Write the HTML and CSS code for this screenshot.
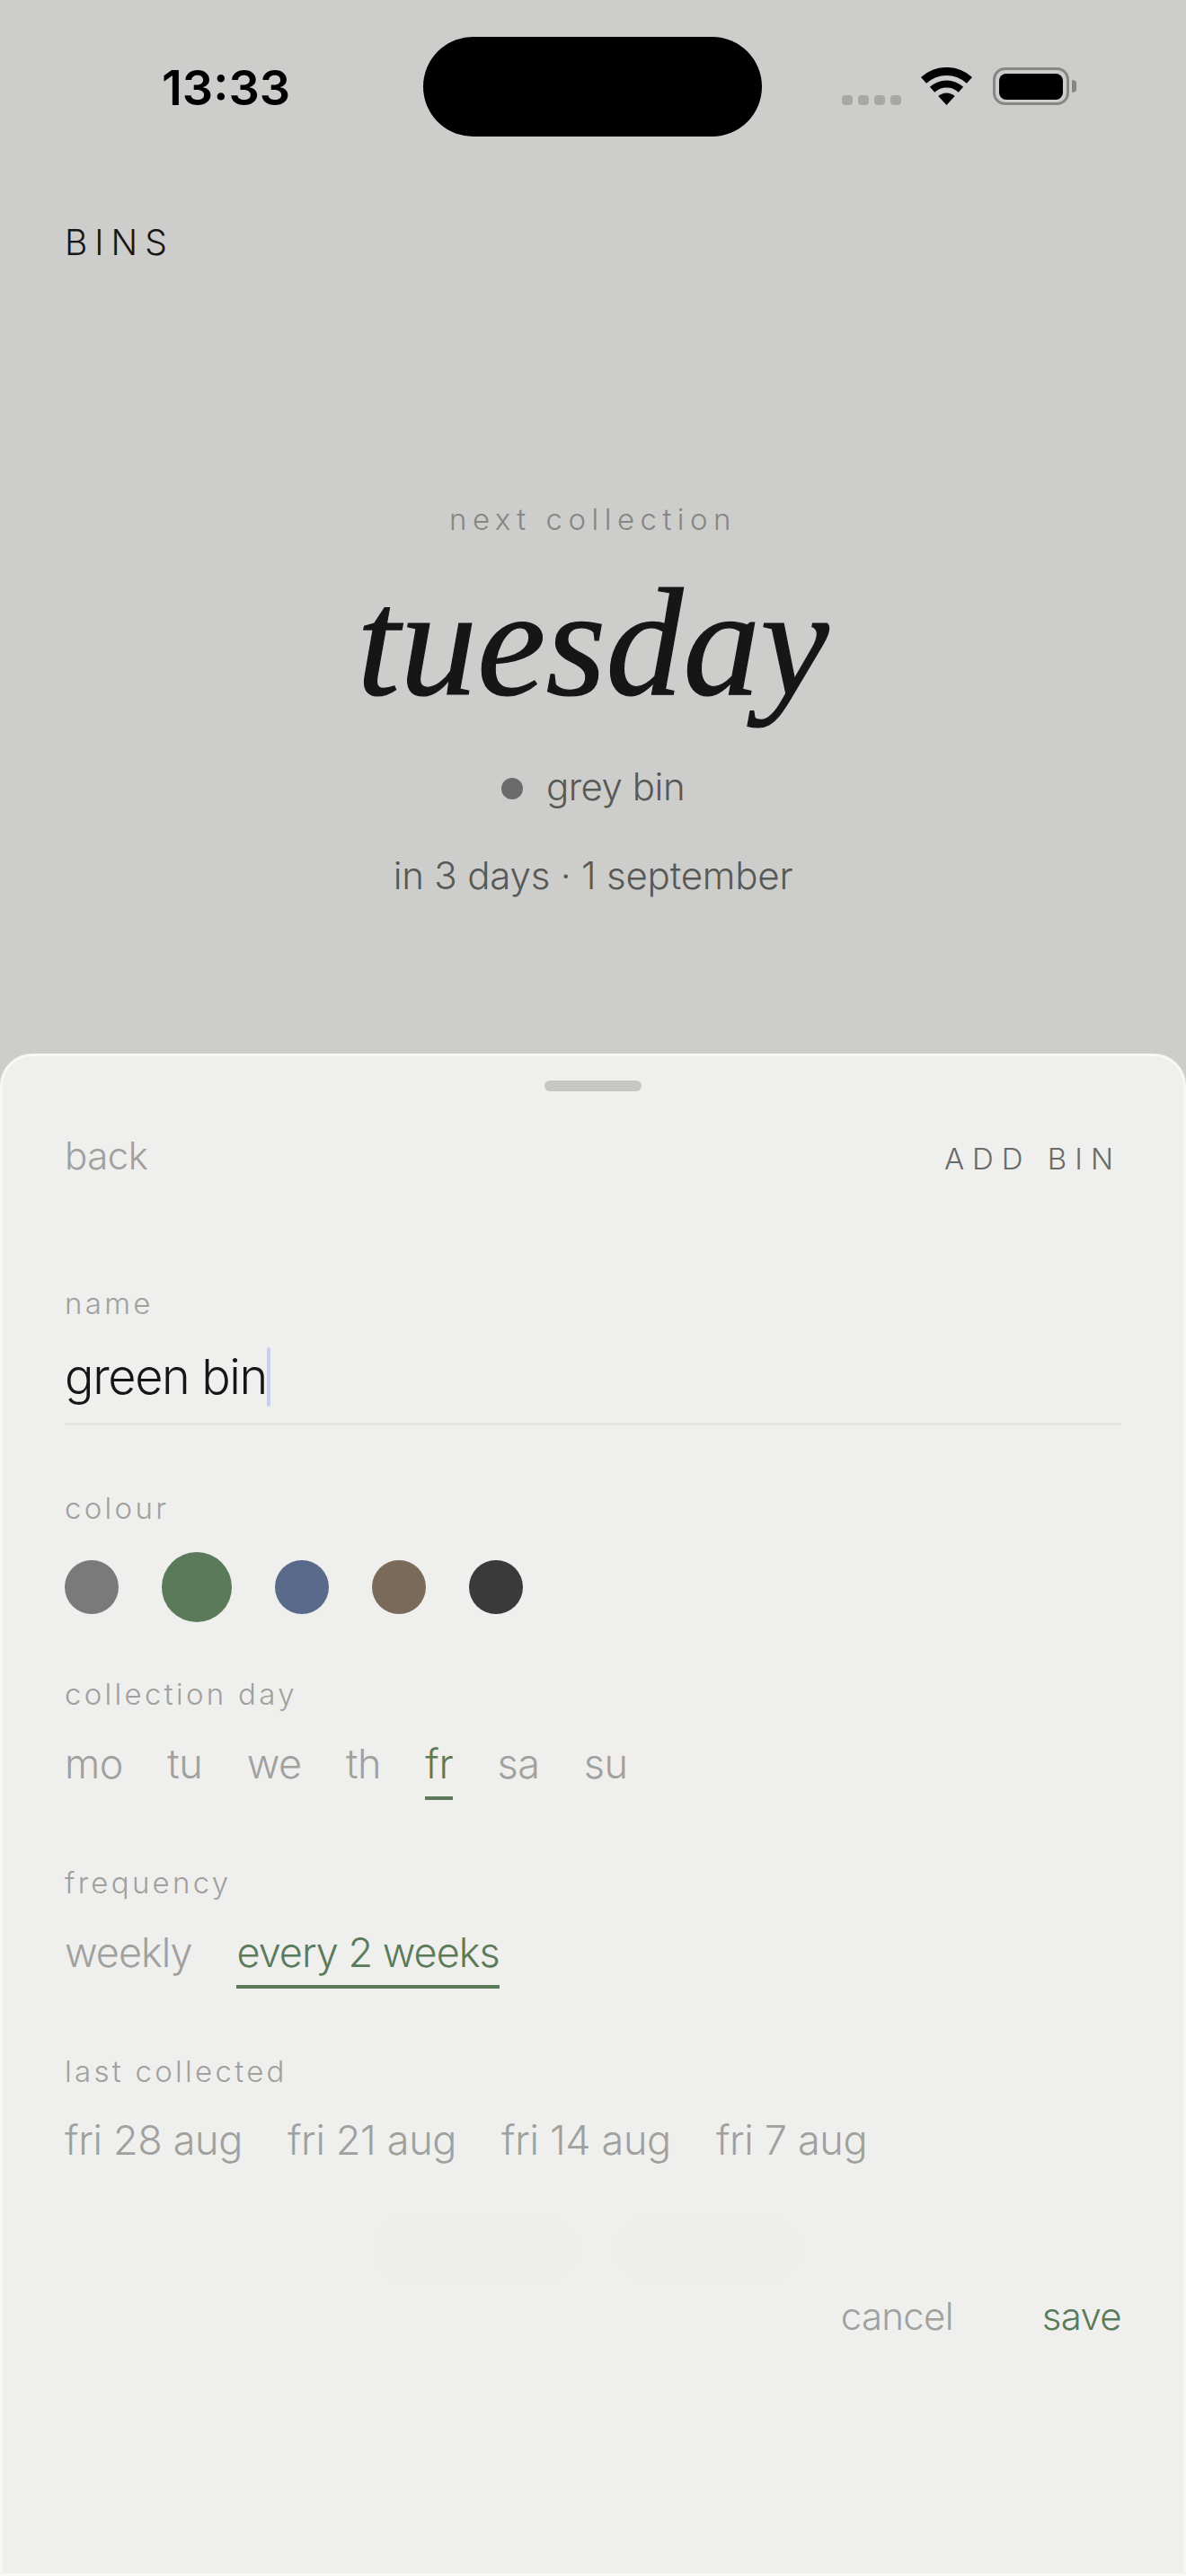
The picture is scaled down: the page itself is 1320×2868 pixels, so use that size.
FILE: index.html
```html
<!DOCTYPE html>
<html lang="en">
<head>
<meta charset="utf-8">
<title>Bins</title>
<link rel="stylesheet" href="styles.css">
</head>
<body>
<div class="screen">
  <div class="backdrop">
    <header class="status">
      <span class="time">13:33</span>
      <span class="island"></span>
      <span class="indicators">
        <span class="signal"><i></i><i></i><i></i><i></i></span>
        <svg class="wifi" width="57" height="42" viewBox="0 0 57 42"><path d="M0 11.1A42 42 0 0 1 57 11.1L50.9 17.7A33 33 0 0 0 6.1 17.7Z"/><path d="M9.9 21.8A27.5 27.5 0 0 1 47.1 21.8L41.7 27.7A19.5 19.5 0 0 0 15.3 27.7Z"/><path d="M19.3 32.1A13.5 13.5 0 0 1 37.7 32.1L28.5 42Z"/></svg>
        <svg class="battery" width="93" height="42" viewBox="0 0 93 42"><rect x="1.5" y="1.5" width="82" height="39" rx="12" fill="none" stroke="#868685" stroke-width="3"/><rect x="7" y="7" width="71" height="29" rx="8" fill="#000"/><path d="M88 14a7 7 0 0 1 0 14Z" fill="#868685"/></svg>
      </span>
    </header>
    <div class="brand">BINS</div>
    <section class="hero">
      <div class="eyebrow">next collection</div>
      <h1 class="day">tuesday</h1>
      <div class="bin"><span class="bin-dot"></span>grey bin</div>
      <div class="when">in 3 days · 1 september</div>
    </section>
  </div>
  <section class="sheet">
    <div class="handle"></div>
    <div class="sheet-head"><span class="back">back</span><span class="title">ADD BIN</span></div>
    <div class="label label-name">name</div>
    <div class="name-field"><span class="name-value">green bin</span><span class="caret"></span></div>
    <div class="label label-section">colour</div>
    <div class="swatches">
      <span class="swatch grey"></span>
      <span class="swatch green selected"></span>
      <span class="swatch blue"></span>
      <span class="swatch brown"></span>
      <span class="swatch dark"></span>
    </div>
    <div class="label label-section-tight">collection day</div>
    <div class="options options-days">
      <span class="opt">mo</span><span class="opt">tu</span><span class="opt">we</span><span class="opt">th</span><span class="opt active">fr</span><span class="opt">sa</span><span class="opt">su</span>
    </div>
    <div class="label label-section">frequency</div>
    <div class="options options-tight">
      <span class="opt">weekly</span><span class="opt active">every 2 weeks</span>
    </div>
    <div class="label label-last">last collected</div>
    <div class="options options-dates">
      <span class="opt">fri 28 aug</span><span class="opt">fri 21 aug</span><span class="opt">fri 14 aug</span><span class="opt">fri 7 aug</span>
    </div>
    <div class="ghosts"><span class="ghost ghost-a"></span><span class="ghost ghost-b"></span></div>
    <div class="actions"><span class="cancel">cancel</span><span class="save">save</span></div>
  </section>
</div>
</body>
</html>
```
FILE: styles.css
```css
* { box-sizing: border-box; }
html, body { margin: 0; padding: 0; }
body {
  width: 1320px;
  height: 2868px;
  overflow: hidden;
  background: #cdcdcb;
  font-family: Inter, "Liberation Sans", sans-serif;
  font-weight: 350;
  -webkit-font-smoothing: antialiased;
}
.screen { display: flex; flex-direction: column; height: 2868px; }
.backdrop { height: 1173px; flex: none; background: #cdcdcb; }

.status { position: relative; height: 152px; }
.time {
  position: absolute; left: 180px; top: 66px;
  font-size: 54px; line-height: 64px; font-weight: 600; color: #000;
}
.island {
  position: absolute; left: 471px; top: 41px;
  width: 377px; height: 111px; border-radius: 56px; background: #000;
}
.indicators { position: absolute; left: 937px; top: 75px; display: flex; align-items: flex-end; width: 262px; height: 42px; }
.signal { display: flex; gap: 6.5px; width: 88px; }
.signal i { display: block; width: 11.5px; height: 11px; border-radius: 4px; background: #a7a7a5; }
.wifi { display: block; fill: #000; flex: none; }
.battery { display: block; flex: none; margin-left: 23px; }

.brand {
  margin: 94px 0 0 72px;
  font-size: 39px; line-height: 48px; font-weight: 350;
  letter-spacing: 8px; color: #161616;
}
.hero { display: flex; flex-direction: column; align-items: center; margin-top: 264px; }
.eyebrow { font-size: 33px; line-height: 40px; letter-spacing: 6.5px; font-weight: 350; color: #868684; }
.day {
  margin: 32px 0 0;
  font-family: "Liberation Serif", serif;
  font-style: italic; font-weight: 400;
  font-size: 172px; line-height: 170px; color: #161616;
  -webkit-text-stroke: 1.2px #161616;
}
.bin { display: flex; align-items: center; margin-top: 50px; font-size: 42px; line-height: 52px; letter-spacing: -0.5px; color: #585856; }
.bin-dot { width: 24px; height: 24px; margin: 3px 26px 0 0; border-radius: 50%; background: #6b6b6b; }
.when { margin-top: 47px; font-size: 42px; line-height: 52px; letter-spacing: -0.2px; color: #585856; }

.sheet {
  position: relative;
  flex: 1;
  padding: 27px 72px 0;
  background: #efefed;
  border: 3px solid #f8f8f6;
  border-radius: 36px 36px 0 0;
}
.handle { width: 108px; height: 12px; border-radius: 6px; background: #c6c6c4; margin: 0 auto; }
.sheet-head { display: flex; justify-content: space-between; align-items: baseline; margin: 48px -3px 0; line-height: 48px; }
.back { font-size: 42px; letter-spacing: -0.5px; color: #a0a09e; }
.title { font-size: 33px; letter-spacing: 9px; font-weight: 350; color: #6a6a68; }

.label { font-size: 33px; line-height: 40px; letter-spacing: 3.3px; font-weight: 350; color: #a0a09e; margin-left: -3px; }
.label-name { margin-top: 117px; }
.label-section { margin-top: 72px; }
.label-section-tight { margin-top: 60px; }
.label-last { margin-top: 72px; }

.name-field {
  display: flex; align-items: stretch;
  margin: 29px -3px 0;
  padding-bottom: 18px;
  border-bottom: 3px solid #e5e5e3;
  font-size: 54px; font-weight: 300; line-height: 66px; letter-spacing: -1.4px; color: #161616;
}
.caret { width: 4.5px; border-radius: 2px; background: #c5cff0; }

.swatches { display: flex; align-items: center; gap: 48px; margin: 29px -3px 0; }
.swatch { width: 60px; height: 60px; border-radius: 50%; }
.swatch.selected { width: 78px; height: 78px; }
.grey { background: #7a7a7a; }
.green { background: #5a7a5a; }
.blue { background: #5a6a8a; }
.brown { background: #7a6a5a; }
.dark { background: #3a3a3a; }

.options { display: flex; gap: 50px; margin: 31px -3px 0; font-size: 45px; line-height: 54px; color: #a0a09e; }
.options-days { letter-spacing: -0.4px; gap: 49.2px; }
.options-tight { letter-spacing: -1px; }
.options-dates { letter-spacing: -0.35px; margin-top: 30px; }
.opt { display: block; padding-bottom: 9px; border-bottom: 4.5px solid transparent; }
.opt.active { color: #5a7a5a; border-bottom-color: #5a7a5a; }

.ghosts { position: absolute; left: 430px; top: 1310px; display: flex; gap: 75px; }
.ghost { display: block; height: 36px; border-radius: 18px; background: #e9e9e7; filter: blur(10px); opacity: .3; }
.ghost-a { width: 193px; }
.ghost-b { width: 174px; }

.actions { display: flex; justify-content: flex-end; gap: 99px; margin: 129.5px -3px 0; font-size: 42px; line-height: 52px; letter-spacing: -0.7px; color: #a0a09e; }
.save { color: #5a7a5a; }
```
